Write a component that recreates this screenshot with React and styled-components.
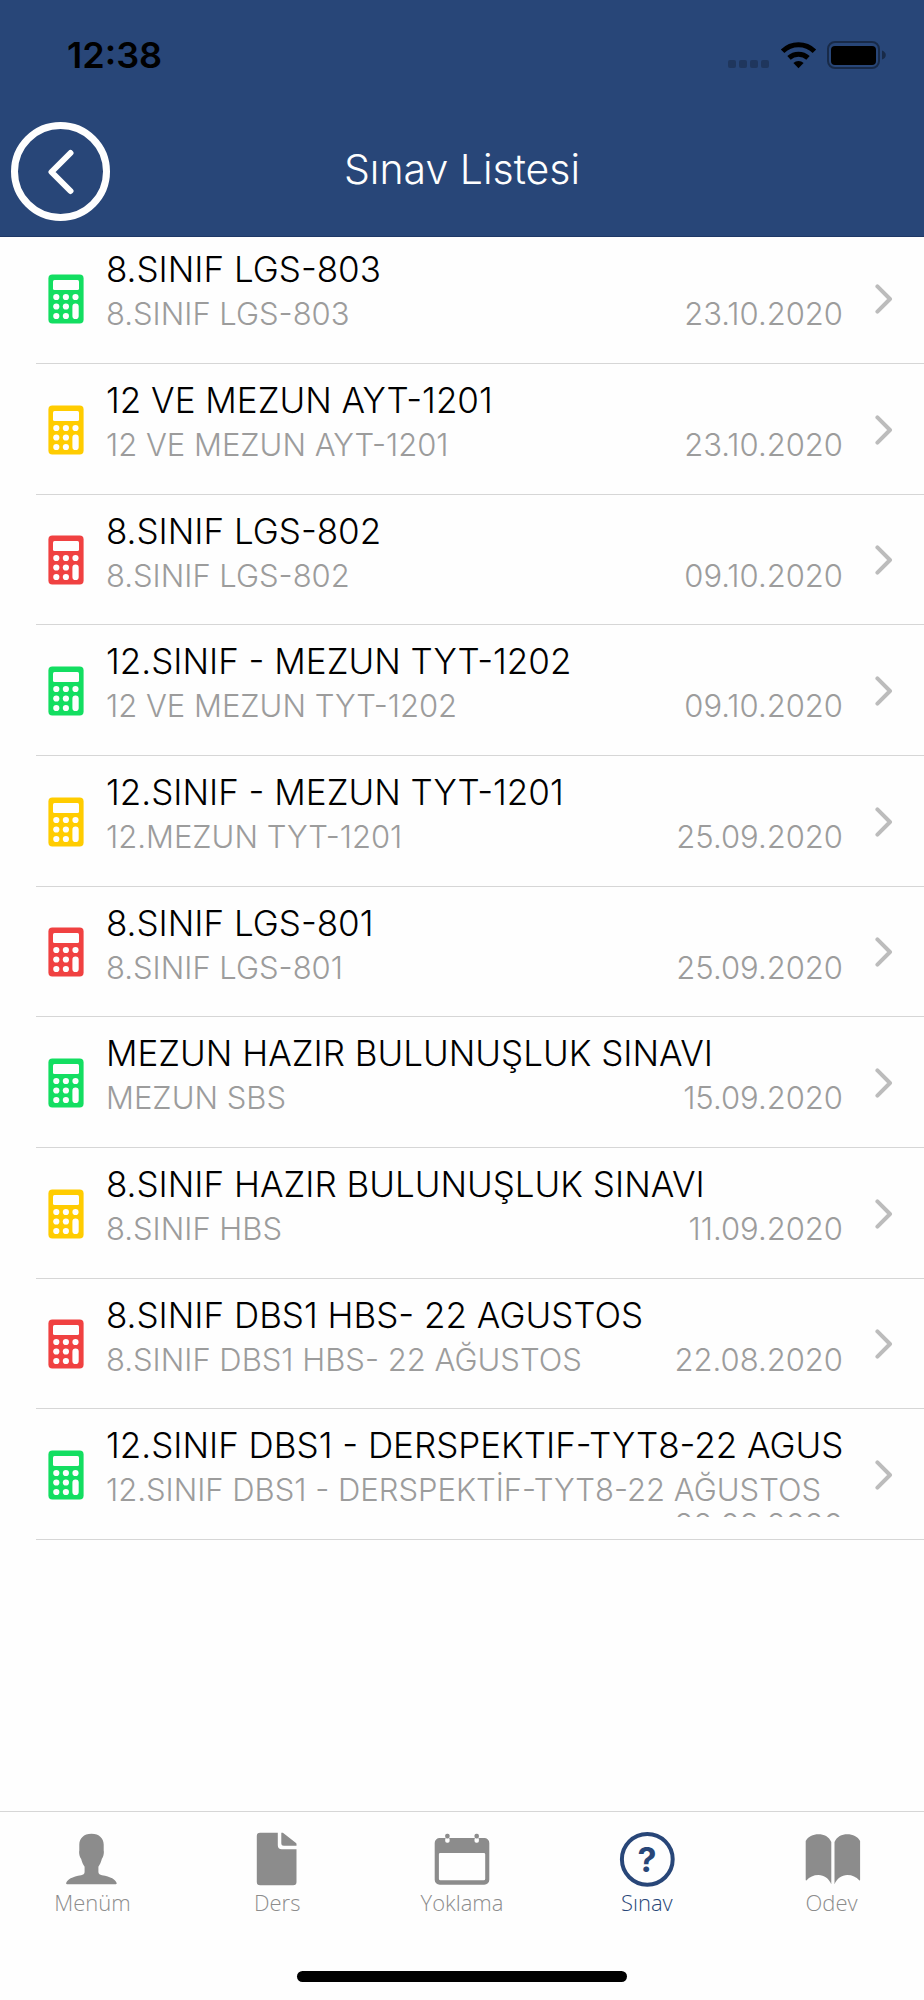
import React from 'react';
import styled, { createGlobalStyle } from 'styled-components';

const COLORS = {
  NAVY: '#284678',
  NAVY_DARK: '#1f3866',
  WHITE: '#fefefe',
  BLACK: '#000000',
  TEXT_MUTED: '#9c9c9c',
  ICON_MUTED: '#8c8c8c',
  CHEVRON: '#bcbcbc',
  BORDER: '#d6d6d6',
  GREEN: '#13de61',
  YELLOW: '#ffcc00',
  RED: '#f04141',
};

const EXAMS = [
  { id: 1, title: '8.SINIF LGS-803', detail: '8.SINIF LGS-803', date: '23.10.2020', color: COLORS.GREEN },
  { id: 2, title: '12 VE MEZUN AYT-1201', detail: '12 VE MEZUN AYT-1201', date: '23.10.2020', color: COLORS.YELLOW },
  { id: 3, title: '8.SINIF LGS-802', detail: '8.SINIF LGS-802', date: '09.10.2020', color: COLORS.RED },
  { id: 4, title: '12.SINIF - MEZUN TYT-1202', detail: '12 VE MEZUN TYT-1202', date: '09.10.2020', color: COLORS.GREEN },
  { id: 5, title: '12.SINIF - MEZUN TYT-1201', detail: '12.MEZUN TYT-1201', date: '25.09.2020', color: COLORS.YELLOW },
  { id: 6, title: '8.SINIF LGS-801', detail: '8.SINIF LGS-801', date: '25.09.2020', color: COLORS.RED },
  { id: 7, title: 'MEZUN HAZIR BULUNUŞLUK SINAVI', detail: 'MEZUN SBS', date: '15.09.2020', color: COLORS.GREEN },
  { id: 8, title: '8.SINIF HAZIR BULUNUŞLUK SINAVI', detail: '8.SINIF HBS', date: '11.09.2020', color: COLORS.YELLOW },
  { id: 9, title: '8.SINIF DBS1 HBS- 22 AĞUSTOS', detail: '8.SINIF DBS1 HBS- 22 AĞUSTOS', date: '22.08.2020', color: COLORS.RED },
  {
    id: 10,
    title: '12.SINIF DBS1 - DERSPEKTİF-TYT8-22 AĞUSTOS',
    detail: '12.SINIF DBS1 - DERSPEKTİF-TYT8-22 AĞUSTOS',
    date: '22.08.2020',
    color: COLORS.GREEN,
  },
];

const StatusIcons = () => (
  <svg width="158" height="28" viewBox="0 0 158 28" aria-hidden="true">
    <g fill={COLORS.BLACK} opacity="0.22">
      <rect x="0" y="19" width="8" height="8" rx="2" />
      <rect x="11" y="19" width="8" height="8" rx="2" />
      <rect x="22" y="19" width="8" height="8" rx="2" />
      <rect x="33" y="19" width="8" height="8" rx="2" />
    </g>
    <path d="M70.5 27.2 L65.4 22 A7.4 7.4 0 0 1 75.6 22 Z" fill={COLORS.BLACK} />
    <g fill="none" stroke={COLORS.BLACK} strokeWidth="5">
      <path d="M61 16.9 A14 14 0 0 1 80 16.9" />
      <path d="M54.6 10.3 A22.6 22.6 0 0 1 86.4 10.3" />
    </g>
    <rect x="100" y="1" width="51" height="26" rx="7" fill="none" stroke={COLORS.BLACK} strokeWidth="2" opacity="0.4" />
    <rect x="103" y="5" width="45" height="19" rx="4" fill={COLORS.BLACK} />
    <path d="M154 9.5 Q157.8 11 157.8 14 Q157.8 17 154 18.5 Z" fill={COLORS.BLACK} opacity="0.4" />
  </svg>
);

const CalculatorIcon = ({ color }) => (
  <svg width="36" height="50" viewBox="0 0 36 50" aria-hidden="true">
    <rect x="0.4" y="0.4" width="35.2" height="49.2" rx="4" fill={color} />
    <g fill={COLORS.WHITE}>
      <rect x="5" y="6" width="26" height="10" rx="1.5" />
      {[23, 32.5, 42].map((cy) => (
        <g key={cy}>
          <circle cx="8.3" cy={cy} r="3.1" />
          <circle cx="17.9" cy={cy} r="3.1" />
        </g>
      ))}
      <circle cx="27.5" cy="23" r="3.1" />
      <rect x="24.4" y="29.6" width="6.3" height="15.5" rx="3.1" />
    </g>
  </svg>
);

const ChevronIcon = () => (
  <svg width="18" height="30" viewBox="0 0 18 30" aria-hidden="true">
    <path
      d="M2.4 2.4 L15 15 L2.4 27.6"
      fill="none"
      stroke={COLORS.CHEVRON}
      strokeWidth="4"
      strokeLinecap="round"
      strokeLinejoin="round"
    />
  </svg>
);

const BackIcon = () => (
  <svg width="26" height="46" viewBox="0 0 26 46" aria-hidden="true">
    <path
      d="M22.5 4 L3.5 23 L22.5 42"
      fill="none"
      stroke={COLORS.WHITE}
      strokeWidth="6"
      strokeLinecap="round"
      strokeLinejoin="round"
    />
  </svg>
);

const PersonIcon = () => (
  <path
    fill="currentColor"
    d="M27.5 2.7 C19.5 2.7 15.5 7.5 15.3 13.5 V19.5 c-.6 2 .3 6.5 1.8 8.3 .8 3.2 2 6 3.5 8 V41 c0 2 -1.5 2.7 -3.5 3.2 C8.5 45.5 2.8 48.5 2.1 52.3 q0 1 1 1 H51.7 q1 0 1 -1 C52 48.5 46.5 45.5 38 44.2 c-2 -.5 -3.6 -1.2 -3.6 -3.2 V35.8 c1.5 -2 2.7 -4.8 3.5 -8 1.5 -1.8 2.4 -6.3 1.8 -8.3 V13.5 C39.5 7.5 35.5 2.7 27.5 2.7 Z"
  />
);

const DocumentIcon = () => (
  <g fill="currentColor">
    <path d="M11.1 1.7 H28.8 V14.3 a4 4 0 0 0 4 4 H47.5 V51 a3.3 3.3 0 0 1 -3.3 3.3 H11.1 a3.3 3.3 0 0 1 -3.3 -3.3 V5 a3.3 3.3 0 0 1 3.3 -3.3 Z" />
    <path d="M32.3 1.7 h1.6 L47 12 q.5 .5 .5 1.2 V14.7 H34.8 a2.5 2.5 0 0 1 -2.5 -2.5 Z" />
  </g>
);

const CalendarIcon = () => (
  <g>
    <path
      fill="currentColor"
      fillRule="evenodd"
      d="M5.7 7 H50.3 a5 5 0 0 1 5 5 V48.7 a5 5 0 0 1 -5 5 H5.7 a5 5 0 0 1 -5 -5 V12 a5 5 0 0 1 5 -5 Z M6.2 22 a1.3 1.3 0 0 0 -1.3 1.3 V47.8 a1.5 1.5 0 0 0 1.5 1.5 H49.7 a1.5 1.5 0 0 0 1.5 -1.5 V23.3 a1.3 1.3 0 0 0 -1.3 -1.3 Z"
    />
    <rect x="11.2" y="6.6" width="4.4" height="5.2" rx="1.8" fill={COLORS.WHITE} />
    <rect x="40.5" y="6.6" width="4.4" height="5.2" rx="1.8" fill={COLORS.WHITE} />
    <rect x="11.2" y="2.8" width="4.4" height="4.8" rx="1.8" fill="currentColor" />
    <rect x="40.5" y="2.8" width="4.4" height="4.8" rx="1.8" fill="currentColor" />
  </g>
);

const QuestionIcon = () => (
  <g>
    <circle cx="28.3" cy="28.3" r="25.4" fill="none" stroke="currentColor" strokeWidth="4" />
    <QuestionMark x="28" y="40.5" textAnchor="middle">
      ?
    </QuestionMark>
  </g>
);

const BookIcon = () => {
  const page =
    'M1.7 10 C4 5.5 9 3.2 14.5 3.2 S25 5.5 27.3 11 V53.3 C25 47.5 20 44 14.5 44 C9.5 44 5.5 46 2.6 49.3 Q1.7 49.8 1.7 48.8 Z';
  return (
    <g fill="currentColor">
      <path d={page} />
      <path d={page} transform="translate(57.8 0) scale(-1 1)" />
    </g>
  );
};

const TABS = [
  { label: 'Menüm', href: '#menum', Icon: PersonIcon },
  { label: 'Ders', href: '#ders', Icon: DocumentIcon },
  { label: 'Yoklama', href: '#yoklama', Icon: CalendarIcon },
  { label: 'Sınav', href: '#sinav', Icon: QuestionIcon, active: true },
  { label: 'Odev', href: '#odev', Icon: BookIcon },
];

const ExamRow = ({ exam }) => (
  <Row>
    <RowLink href={`#exam-${exam.id}`}>
      <CalculatorIcon color={exam.color} />
      <RowBody>
        <RowTitle>{exam.title}</RowTitle>
        <RowMeta>
          <span>{exam.detail}</span>
          <RowDate>{exam.date}</RowDate>
        </RowMeta>
      </RowBody>
      <ChevronIcon />
    </RowLink>
  </Row>
);

const App = () => {
  return (
    <Screen>
      <GlobalStyle />
      <Header>
        <StatusBar>
          <Clock>12:38</Clock>
          <StatusIcons />
        </StatusBar>
        <NavBar>
          <BackButton type="button" aria-label="Geri">
            <BackIcon />
          </BackButton>
          <NavTitle>Sınav Listesi</NavTitle>
        </NavBar>
      </Header>
      <Main>
        <ExamList>
          {EXAMS.map((exam) => (
            <ExamRow key={exam.id} exam={exam} />
          ))}
        </ExamList>
      </Main>
      <Footer>
        <TabBar>
          {TABS.map(({ label, href, Icon, active }) => (
            <Tab key={label} href={href} $active={active} aria-current={active ? 'page' : undefined}>
              <svg width="56" height="56" viewBox="0 0 56 56" overflow="visible" aria-hidden="true">
                <Icon />
              </svg>
              <TabLabel $active={active}>{label}</TabLabel>
            </Tab>
          ))}
        </TabBar>
        <HomeIndicator />
      </Footer>
    </Screen>
  );
};

const GlobalStyle = createGlobalStyle`
  * {
    box-sizing: border-box;
  }
  body {
    margin: 0;
    background-color: ${COLORS.WHITE};
    font-family: Inter, 'Open Sans', sans-serif;
  }
`;

const Screen = styled.div`
  display: flex;
  flex-direction: column;
  min-height: 100vh;
`;

const Header = styled.header`
  position: relative;
  z-index: 1;
  background-color: ${COLORS.NAVY};
  border-bottom: 1px solid ${COLORS.NAVY_DARK};
`;

const StatusBar = styled.div`
  display: flex;
  align-items: center;
  justify-content: space-between;
  height: 107px;
  padding: 3px 38px 0 67px;
`;

const Clock = styled.span`
  font-size: 36px;
  font-weight: 600;
  color: ${COLORS.BLACK};
`;

const NavBar = styled.div`
  display: grid;
  grid-template-columns: 1fr auto 1fr;
  align-items: center;
  height: 129px;
  padding: 0 11px;
`;

const BackButton = styled.button`
  display: flex;
  align-items: center;
  justify-content: center;
  width: 99px;
  height: 99px;
  padding: 0;
  border: 7px solid ${COLORS.WHITE};
  border-radius: 50%;
  background: none;
  cursor: pointer;
`;

const NavTitle = styled.h1`
  margin: 0;
  padding-bottom: 6px;
  font-size: 41px;
  font-weight: 300;
  line-height: 56px;
  color: ${COLORS.WHITE};
`;

const Main = styled.main`
  flex: 1;
`;

// the first row slides slightly under the header
const ExamList = styled.ul`
  margin: -4px 0 0;
  padding: 0 0 0 36px;
  list-style: none;
`;

const Row = styled.li`
  height: 131px;
  border-bottom: 1px solid ${COLORS.BORDER};

  &:nth-child(3n) {
    height: 130px;
  }
`;

const RowLink = styled.a`
  display: flex;
  align-items: center;
  height: 100%;
  padding: 1px 31px 0 12px;
  color: inherit;
  text-decoration: none;

  svg {
    flex: none;
  }
`;

const RowBody = styled.div`
  flex: 1;
  min-width: 0;
  height: 85px;
  margin: 0 32px 0 22px;
  overflow: hidden;
`;

const RowTitle = styled.div`
  padding-bottom: 14px;
  overflow: hidden;
  font-size: 35px;
  font-weight: 300;
  line-height: 26px;
  white-space: nowrap;
  color: ${COLORS.BLACK};
`;

const RowMeta = styled.div`
  display: flex;
  flex-wrap: wrap;
  column-gap: 12px;
  font-size: 31px;
  font-weight: 300;
  line-height: 35px;
  white-space: nowrap;
  color: ${COLORS.TEXT_MUTED};
`;

const RowDate = styled.span`
  margin-left: auto;
`;

const Footer = styled.footer`
  border-top: 1px solid ${COLORS.BORDER};
`;

const TabBar = styled.nav`
  display: grid;
  grid-template-columns: repeat(5, 1fr);
  padding-top: 19px;
`;

const Tab = styled.a`
  display: flex;
  flex-direction: column;
  align-items: center;
  color: ${(props) => (props.$active ? COLORS.NAVY : COLORS.ICON_MUTED)};
  text-decoration: none;
`;

const TabLabel = styled.span`
  font-family: 'Open Sans', sans-serif;
  font-size: 22px;
  font-weight: 300;
  line-height: 30px;
  color: ${(props) => (props.$active ? COLORS.NAVY : COLORS.ICON_MUTED)};
`;

const QuestionMark = styled.text`
  font-size: 34px;
  font-weight: 700;
  fill: currentColor;
`;

const HomeIndicator = styled.div`
  width: 330px;
  height: 11px;
  margin: 54px auto 18px;
  border-radius: 6px;
  background-color: ${COLORS.BLACK};
`;

export default App;
